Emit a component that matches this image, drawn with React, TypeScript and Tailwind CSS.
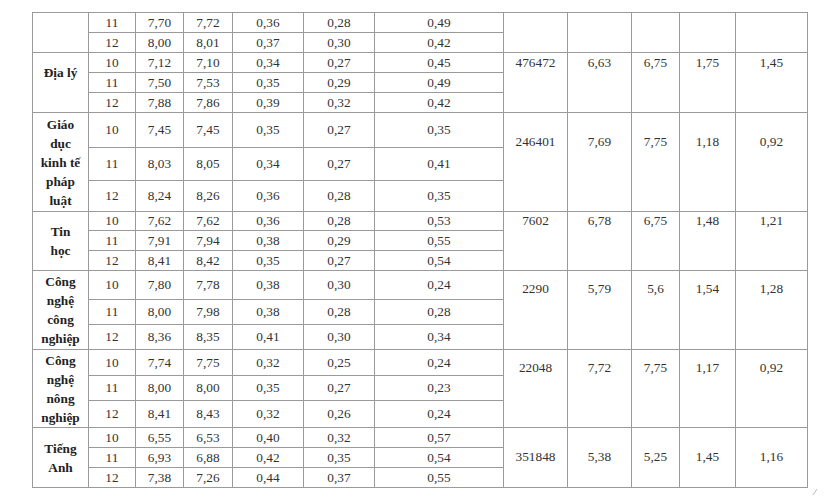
import React from "react";

type Row = {
  h: number;
  grade: string;
  a: string;
  b: string;
  c: string;
  d: string;
  e: string;
};

type Group = {
  subject: string[];
  subjectAlign: "top" | "middle";
  subjectPad?: number;
  right: string[] | null;
  rightPad: number;
  rows: Row[];
};

const groups: Group[] = [
  {
    subject: [],
    subjectAlign: "middle",
    right: null,
    rightPad: 0,
    rows: [
      { h: 20, grade: "11", a: "7,70", b: "7,72", c: "0,36", d: "0,28", e: "0,49" },
      { h: 20, grade: "12", a: "8,00", b: "8,01", c: "0,37", d: "0,30", e: "0,42" },
    ],
  },
  {
    subject: ["Địa lý"],
    subjectAlign: "top",
    subjectPad: 10,
    right: ["476472", "6,63", "6,75", "1,75", "1,45"],
    rightPad: 2,
    rows: [
      { h: 20, grade: "10", a: "7,12", b: "7,10", c: "0,34", d: "0,27", e: "0,45" },
      { h: 20, grade: "11", a: "7,50", b: "7,53", c: "0,35", d: "0,29", e: "0,49" },
      { h: 20, grade: "12", a: "7,88", b: "7,86", c: "0,39", d: "0,32", e: "0,42" },
    ],
  },
  {
    subject: ["Giáo", "dục", "kinh tế", "pháp", "luật"],
    subjectAlign: "middle",
    right: ["246401", "7,69", "7,75", "1,18", "0,92"],
    rightPad: 21,
    rows: [
      { h: 35, grade: "10", a: "7,45", b: "7,45", c: "0,35", d: "0,27", e: "0,35" },
      { h: 33, grade: "11", a: "8,03", b: "8,05", c: "0,34", d: "0,27", e: "0,41" },
      { h: 31, grade: "12", a: "8,24", b: "8,26", c: "0,36", d: "0,28", e: "0,35" },
    ],
  },
  {
    subject: ["Tin", "học"],
    subjectAlign: "middle",
    right: ["7602", "6,78", "6,75", "1,48", "1,21"],
    rightPad: 1,
    rows: [
      { h: 19, grade: "10", a: "7,62", b: "7,62", c: "0,36", d: "0,28", e: "0,53" },
      { h: 20, grade: "11", a: "7,91", b: "7,94", c: "0,38", d: "0,29", e: "0,55" },
      { h: 20, grade: "12", a: "8,41", b: "8,42", c: "0,35", d: "0,27", e: "0,54" },
    ],
  },
  {
    subject: ["Công", "nghệ", "công", "nghiệp"],
    subjectAlign: "middle",
    right: ["2290", "5,79", "5,6", "1,54", "1,28"],
    rightPad: 10,
    rows: [
      { h: 29, grade: "10", a: "7,80", b: "7,78", c: "0,38", d: "0,30", e: "0,24" },
      { h: 25, grade: "11", a: "8,00", b: "7,98", c: "0,38", d: "0,28", e: "0,28" },
      { h: 25, grade: "12", a: "8,36", b: "8,35", c: "0,41", d: "0,30", e: "0,34" },
    ],
  },
  {
    subject: ["Công", "nghệ", "nông", "nghiệp"],
    subjectAlign: "middle",
    right: ["22048", "7,72", "7,75", "1,17", "0,92"],
    rightPad: 10,
    rows: [
      { h: 26, grade: "10", a: "7,74", b: "7,75", c: "0,32", d: "0,25", e: "0,24" },
      { h: 25, grade: "11", a: "8,00", b: "8,00", c: "0,35", d: "0,27", e: "0,23" },
      { h: 27, grade: "12", a: "8,41", b: "8,43", c: "0,32", d: "0,26", e: "0,24" },
    ],
  },
  {
    subject: ["Tiếng", "Anh"],
    subjectAlign: "middle",
    right: ["351848", "5,38", "5,25", "1,45", "1,16"],
    rightPad: 21,
    rows: [
      { h: 20, grade: "10", a: "6,55", b: "6,53", c: "0,40", d: "0,32", e: "0,57" },
      { h: 20, grade: "11", a: "6,93", b: "6,88", c: "0,42", d: "0,35", e: "0,54" },
      { h: 20, grade: "12", a: "7,38", b: "7,26", c: "0,44", d: "0,37", e: "0,55" },
    ],
  },
];

const cell = "border border-[#9a9a9a] p-0 text-center align-middle leading-[16px]";

export default function App() {
  return (
    <div
      className="relative w-[840px] h-[500px] bg-white text-[#333333]"
      style={{ fontFamily: '"Liberation Serif", "Times New Roman", serif' }}
    >
      <div className="pl-[32px] pt-[12px]">
        <table className="border-collapse table-fixed w-[775px] text-[13.3px]">
          <colgroup>
            <col className="w-[56px]" />
            <col className="w-[47px]" />
            <col className="w-[48px]" />
            <col className="w-[49px]" />
            <col className="w-[71px]" />
            <col className="w-[71px]" />
            <col className="w-[129px]" />
            <col className="w-[64px]" />
            <col className="w-[64px]" />
            <col className="w-[48px]" />
            <col className="w-[56px]" />
            <col className="w-[72px]" />
          </colgroup>
          <tbody>
            {groups.map((g, gi) =>
              g.rows.map((r, ri) => (
                <tr key={`${gi}-${ri}`} style={{ height: r.h }}>
                  {ri === 0 && (
                    <td
                      rowSpan={g.rows.length}
                      className={`${cell} font-bold text-[#222222] !leading-[19px] ${
                        g.subjectAlign === "top" ? "!align-top" : ""
                      }`}
                      style={g.subjectPad ? { paddingTop: g.subjectPad } : undefined}
                    >
                      {g.subject.map((s, si) => (
                        <div key={si}>{s}</div>
                      ))}
                    </td>
                  )}
                  <td className={cell}>{r.grade}</td>
                  <td className={cell}>{r.a}</td>
                  <td className={cell}>{r.b}</td>
                  <td className={cell}>{r.c}</td>
                  <td className={cell}>{r.d}</td>
                  <td className={cell}>{r.e}</td>
                  {ri === 0 &&
                    [0, 1, 2, 3, 4].map((k) => (
                      <td
                        key={k}
                        rowSpan={g.rows.length}
                        className={`${cell} !align-top`}
                        style={{ paddingTop: g.rightPad }}
                      >
                        {g.right ? g.right[k] : ""}
                      </td>
                    ))}
                </tr>
              ))
            )}
          </tbody>
        </table>
      </div>
      <svg
        className="absolute left-[812px] top-[488px]"
        width="6"
        height="8"
        viewBox="0 0 6 8"
      >
        <line x1="1" y1="7" x2="5" y2="1" stroke="#bbbbbb" strokeWidth="1" />
      </svg>
    </div>
  );
}
